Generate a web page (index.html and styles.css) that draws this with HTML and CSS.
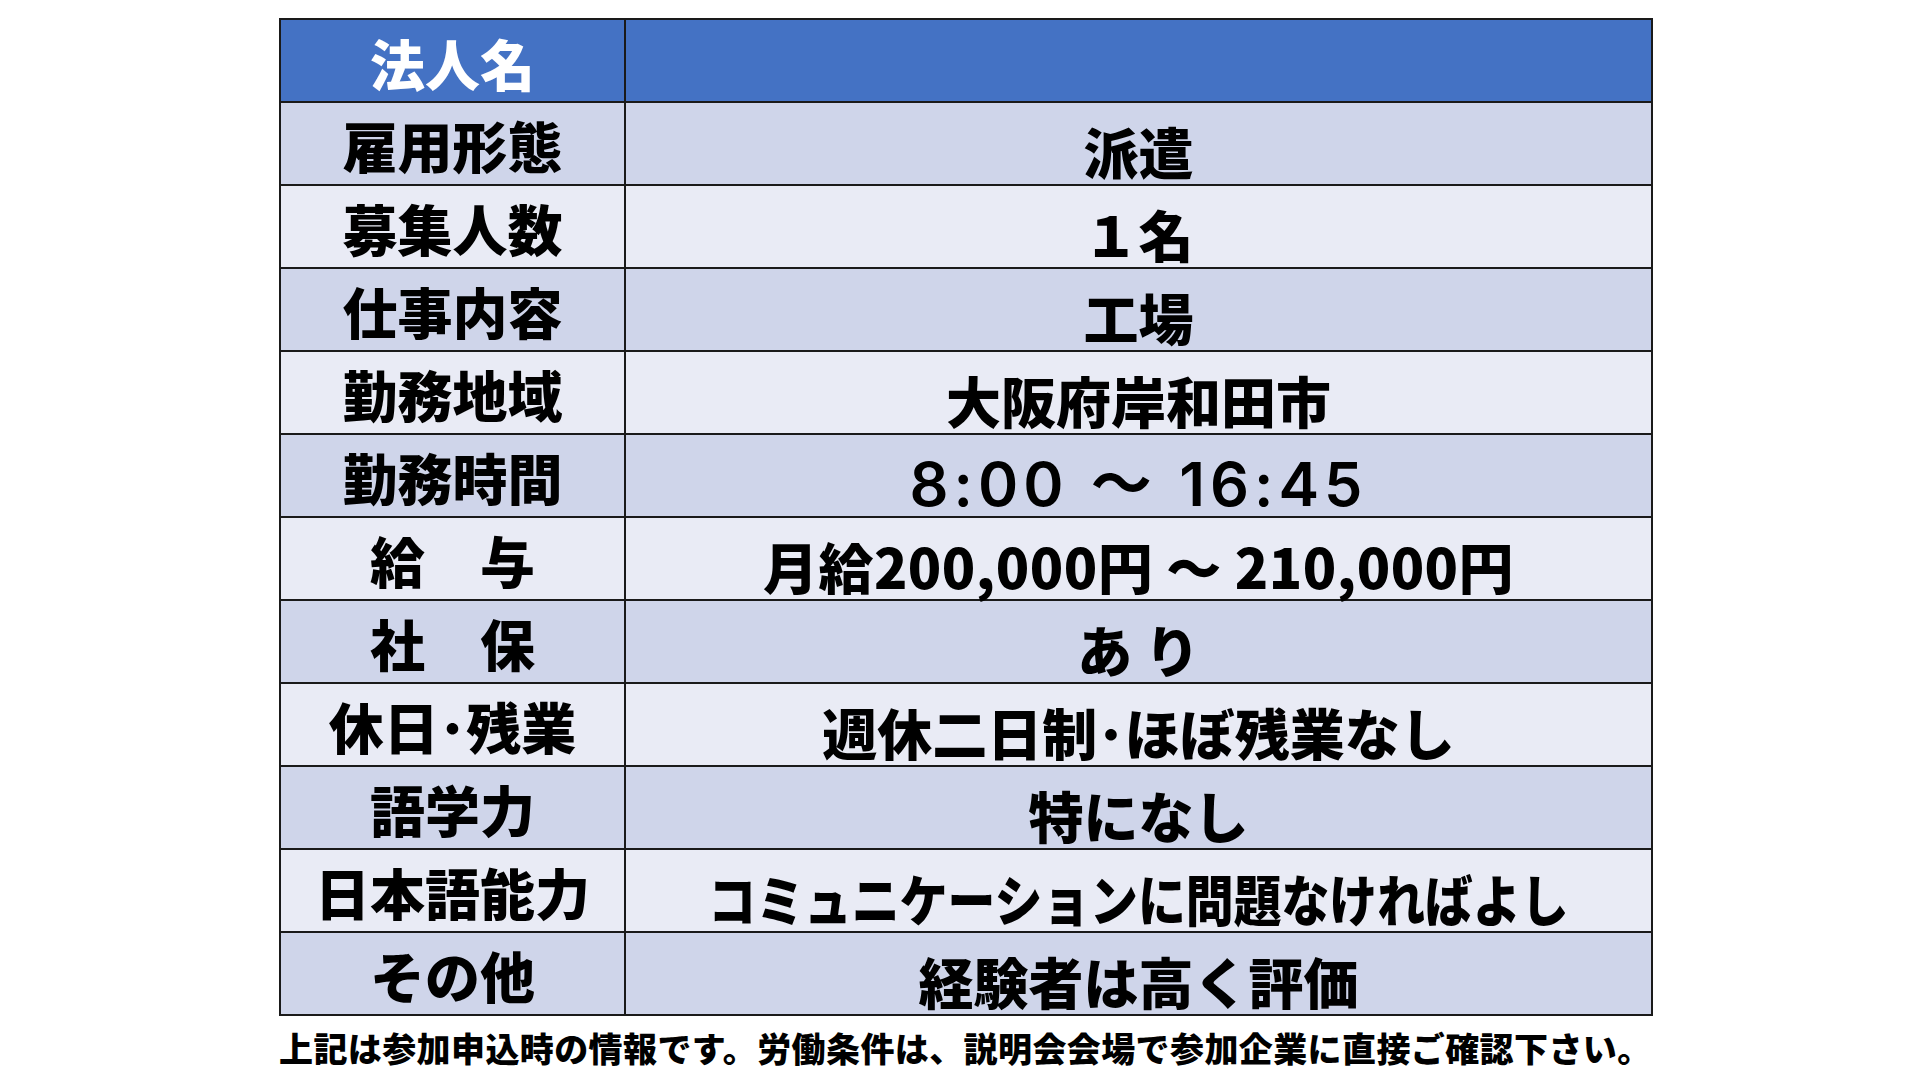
FILE: index.html
```html
<!DOCTYPE html>
<html lang="ja">
<head>
<meta charset="utf-8">
<title>求人情報</title>
<link rel="stylesheet" href="styles.css">
</head>
<body>
<main class="page">
  <table class="job">
    <tr class="head">
      <th class="label">法人名</th>
      <td class="value"></td>
    </tr>
    <tr class="odd">
      <th class="label">雇用形態</th>
      <td class="value">派遣</td>
    </tr>
    <tr class="even">
      <th class="label">募集人数</th>
      <td class="value">１名</td>
    </tr>
    <tr class="odd">
      <th class="label">仕事内容</th>
      <td class="value">工場</td>
    </tr>
    <tr class="even">
      <th class="label">勤務地域</th>
      <td class="value">大阪府岸和田市</td>
    </tr>
    <tr class="odd">
      <th class="label">勤務時間</th>
      <td class="value time">8:00 ～ 16:45</td>
    </tr>
    <tr class="even">
      <th class="label">給　与</th>
      <td class="value salary">月給200,000円 ～ 210,000円</td>
    </tr>
    <tr class="odd">
      <th class="label">社　保</th>
      <td class="value">あ り</td>
    </tr>
    <tr class="even">
      <th class="label">休日･残業</th>
      <td class="value">週休二日制･ほぼ残業なし</td>
    </tr>
    <tr class="odd">
      <th class="label">語学力</th>
      <td class="value">特になし</td>
    </tr>
    <tr class="even">
      <th class="label">日本語能力</th>
      <td class="value"><span class="squeeze">コミュニケーションに問題なければよし</span></td>
    </tr>
    <tr class="odd">
      <th class="label">その他</th>
      <td class="value">経験者は高く評価</td>
    </tr>
  </table>
  <p class="note">上記は参加申込時の情報です。労働条件は、説明会会場で参加企業に直接ご確認下さい。</p>
</main>
</body>
</html>
```
FILE: styles.css
```css
html, body {
  margin: 0;
  padding: 0;
  background: #ffffff;
}

body {
  font-family: "Noto Sans CJK JP", "Noto Sans", sans-serif;
  color: #000000;
}

.page {
  padding: 18px 0 0 279px;
}

.job {
  border-collapse: collapse;
  width: 1374px;
  table-layout: fixed;
}

.job tr {
  height: 83px;
}

.job th,
.job td {
  border: 2px solid #1a1a1a;
  padding: 0;
  text-align: center;
  vertical-align: middle;
  font-weight: 900;
  font-size: 55px;
  line-height: 1;
  white-space: nowrap;
}

.job .label {
  width: 343px;
  padding-top: 2px;
}

.job .value {
  padding-top: 13px;
}

.head th,
.head td {
  background: #4472c4;
  color: #ffffff;
}

.job .head .label {
  padding-top: 4px;
}

.odd th,
.odd td {
  background: #cfd5ea;
}

.even th,
.even td {
  background: #e9ebf5;
}

.job .time {
  font-family: "Inter", "Noto Sans CJK JP", sans-serif;
  font-weight: 600;
  font-size: 61px;
  letter-spacing: 5px;
  word-spacing: 2px;
  padding-top: 17px;
}

.job .salary {
  letter-spacing: 0.5px;
}

.squeeze {
  display: inline-block;
  transform: scaleX(0.87);
  transform-origin: center;
  margin: 0 -70px;
}

.note {
  margin: 12px 0 0 0;
  font-weight: 900;
  font-size: 34px;
  line-height: 1.2;
  letter-spacing: 0.4px;
}
```
